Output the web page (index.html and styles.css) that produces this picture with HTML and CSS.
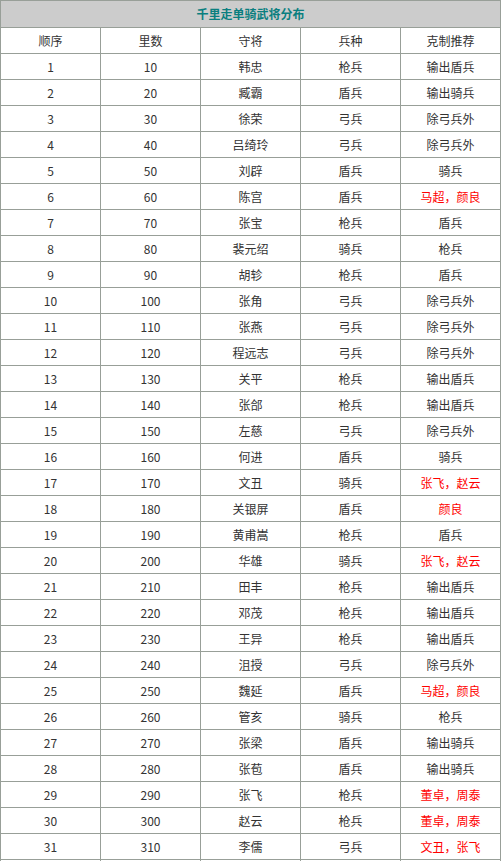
FILE: index.html
```html
<!DOCTYPE html>
<html lang="zh-CN">
<head>
<meta charset="utf-8">
<title>千里走单骑武将分布</title>
<link rel="stylesheet" href="styles.css">
</head>
<body>
<table class="dist">
<thead>
<tr class="title-row"><th colspan="5">千里走单骑武将分布</th></tr>
<tr class="head-row"><td>顺序</td><td>里数</td><td>守将</td><td>兵种</td><td>克制推荐</td></tr>
</thead>
<tbody>
<tr><td>1</td><td>10</td><td>韩忠</td><td>枪兵</td><td>输出盾兵</td></tr>
<tr><td>2</td><td>20</td><td>臧霸</td><td>盾兵</td><td>输出骑兵</td></tr>
<tr><td>3</td><td>30</td><td>徐荣</td><td>弓兵</td><td>除弓兵外</td></tr>
<tr><td>4</td><td>40</td><td>吕绮玲</td><td>弓兵</td><td>除弓兵外</td></tr>
<tr><td>5</td><td>50</td><td>刘辟</td><td>盾兵</td><td>骑兵</td></tr>
<tr><td>6</td><td>60</td><td>陈宫</td><td>盾兵</td><td class="red">马超，颜良</td></tr>
<tr><td>7</td><td>70</td><td>张宝</td><td>枪兵</td><td>盾兵</td></tr>
<tr><td>8</td><td>80</td><td>裴元绍</td><td>骑兵</td><td>枪兵</td></tr>
<tr><td>9</td><td>90</td><td>胡轸</td><td>枪兵</td><td>盾兵</td></tr>
<tr><td>10</td><td>100</td><td>张角</td><td>弓兵</td><td>除弓兵外</td></tr>
<tr><td>11</td><td>110</td><td>张燕</td><td>弓兵</td><td>除弓兵外</td></tr>
<tr><td>12</td><td>120</td><td>程远志</td><td>弓兵</td><td>除弓兵外</td></tr>
<tr><td>13</td><td>130</td><td>关平</td><td>枪兵</td><td>输出盾兵</td></tr>
<tr><td>14</td><td>140</td><td>张郃</td><td>枪兵</td><td>输出盾兵</td></tr>
<tr><td>15</td><td>150</td><td>左慈</td><td>弓兵</td><td>除弓兵外</td></tr>
<tr><td>16</td><td>160</td><td>何进</td><td>盾兵</td><td>骑兵</td></tr>
<tr><td>17</td><td>170</td><td>文丑</td><td>骑兵</td><td class="red">张飞，赵云</td></tr>
<tr><td>18</td><td>180</td><td>关银屏</td><td>盾兵</td><td class="red">颜良</td></tr>
<tr><td>19</td><td>190</td><td>黄甫嵩</td><td>枪兵</td><td>盾兵</td></tr>
<tr><td>20</td><td>200</td><td>华雄</td><td>骑兵</td><td class="red">张飞，赵云</td></tr>
<tr><td>21</td><td>210</td><td>田丰</td><td>枪兵</td><td>输出盾兵</td></tr>
<tr><td>22</td><td>220</td><td>邓茂</td><td>枪兵</td><td>输出盾兵</td></tr>
<tr><td>23</td><td>230</td><td>王异</td><td>枪兵</td><td>输出盾兵</td></tr>
<tr><td>24</td><td>240</td><td>沮授</td><td>弓兵</td><td>除弓兵外</td></tr>
<tr><td>25</td><td>250</td><td>魏延</td><td>盾兵</td><td class="red">马超，颜良</td></tr>
<tr><td>26</td><td>260</td><td>管亥</td><td>骑兵</td><td>枪兵</td></tr>
<tr><td>27</td><td>270</td><td>张梁</td><td>盾兵</td><td>输出骑兵</td></tr>
<tr><td>28</td><td>280</td><td>张苞</td><td>盾兵</td><td>输出骑兵</td></tr>
<tr><td>29</td><td>290</td><td>张飞</td><td>枪兵</td><td class="red">董卓，周泰</td></tr>
<tr><td>30</td><td>300</td><td>赵云</td><td>枪兵</td><td class="red">董卓，周泰</td></tr>
<tr><td>31</td><td>310</td><td>李儒</td><td>弓兵</td><td class="red">文丑，张飞</td></tr>
<tr><td></td><td></td><td></td><td></td><td></td></tr>
</tbody>
</table>
</body>
</html>
```
FILE: styles.css
```css
html, body {
  margin: 0;
  padding: 0;
  background: #ffffff;
}

.dist {
  border-collapse: collapse;
  table-layout: fixed;
  width: 501px;
  font-family: "Noto Sans CJK SC", "Microsoft YaHei", sans-serif;
  font-size: 12px;
  color: #333333;
}

.dist th,
.dist td {
  border: 1px solid #989f98;
  text-align: center;
  vertical-align: middle;
  padding: 0;
  line-height: 16px;
}

.dist td {
  width: 99px;
  height: 25px;
}

.title-row th {
  height: 26px;
  background: #cccccc;
  color: #0a7f7f;
  font-weight: bold;
}

.head-row td {
  height: 25px;
}

.dist td.red {
  color: #ff0000;
}
```
